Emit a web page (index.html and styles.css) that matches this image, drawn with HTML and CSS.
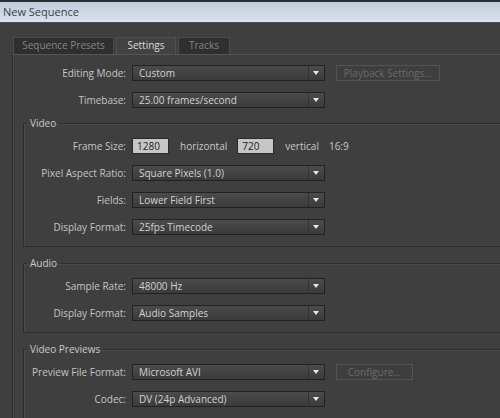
FILE: index.html
```html
<!DOCTYPE html>
<html lang="en">
<head>
    <meta charset="UTF-8">
    <title>New Sequence</title>
    <link rel="stylesheet" href="styles.css">
</head>
<body>
    <div class="title-bar">New Sequence</div>
    <div class="dialog">
        <div class="tabs">
            <div class="tab">Sequence Presets</div>
            <div class="tab active">Settings</div>
            <div class="tab">Tracks</div>
        </div>
        <div class="panel">
            <div class="row top-row">
                <span class="label">Editing Mode:</span>
                <div class="select"><span>Custom</span><i class="arrow"></i></div>
                <button class="btn playback" disabled>Playback Settings...</button>
            </div>
            <div class="row">
                <span class="label">Timebase:</span>
                <div class="select"><span>25.00 frames/second</span><i class="arrow"></i></div>
            </div>

            <fieldset class="group">
                <legend>Video</legend>
                <div class="row">
                    <span class="label">Frame Size:</span>
                    <input class="num" type="text" value="1280">
                    <span class="unit">horizontal</span>
                    <input class="num" type="text" value="720">
                    <span class="unit">vertical</span>
                    <span class="unit">16:9</span>
                </div>
                <div class="row">
                    <span class="label">Pixel Aspect Ratio:</span>
                    <div class="select"><span>Square Pixels (1.0)</span><i class="arrow"></i></div>
                </div>
                <div class="row">
                    <span class="label">Fields:</span>
                    <div class="select"><span>Lower Field First</span><i class="arrow"></i></div>
                </div>
                <div class="row">
                    <span class="label">Display Format:</span>
                    <div class="select"><span>25fps Timecode</span><i class="arrow"></i></div>
                </div>
            </fieldset>

            <fieldset class="group">
                <legend>Audio</legend>
                <div class="row">
                    <span class="label">Sample Rate:</span>
                    <div class="select"><span>48000 Hz</span><i class="arrow"></i></div>
                </div>
                <div class="row">
                    <span class="label">Display Format:</span>
                    <div class="select"><span>Audio Samples</span><i class="arrow"></i></div>
                </div>
            </fieldset>

            <fieldset class="group">
                <legend>Video Previews</legend>
                <div class="row">
                    <span class="label">Preview File Format:</span>
                    <div class="select"><span>Microsoft AVI</span><i class="arrow"></i></div>
                    <button class="btn configure" disabled>Configure...</button>
                </div>
                <div class="row">
                    <span class="label">Codec:</span>
                    <div class="select"><span>DV (24p Advanced)</span><i class="arrow"></i></div>
                </div>
            </fieldset>
        </div>
    </div>
</body>
</html>
```

FILE: styles.css
```css
html, body {
    margin: 0;
    width: 500px;
    height: 418px;
    overflow: hidden;
}

body {
    font-family: "Open Sans", "Noto Sans", Arial, sans-serif;
    font-size: 10px;
    background-color: #3f3f3f;
    color: #c8c8c8;
}

.title-bar {
    height: 20px;
    border-top: 2px solid #2b2e33;
    border-bottom: 1px solid #4d5157;
    background: linear-gradient(#bfcbd9, #d9e4f0);
    color: #3a3f46;
    font-size: 11px;
    line-height: 20px;
    padding-left: 3px;
}

.dialog {
    width: 520px;
    padding: 14px 0 0 12px;
}

.tabs {
    display: flex;
    gap: 2px;
    padding-left: 1px;
    height: 17px;
}

.tab {
    box-sizing: border-box;
    height: 17px;
    line-height: 15px;
    background-color: #2f2f2f;
    border: 1px solid #4a4a4a;
    border-bottom: none;
    color: #858585;
    text-align: center;
    white-space: nowrap;
}

.tab:first-child {
    width: 101px;
}

.tab.active {
    width: 60px;
    background-color: #424242;
    color: #dcdcdc;
    border-color: #505050;
}

.tab:last-child {
    width: 52px;
}

.panel {
    border-top: 1px solid #555555;
    border-left: 1px solid #2e2e2e;
    box-shadow: inset 1px 0 #4a4a4a;
    padding-top: 10px;
}

.row {
    display: flex;
    align-items: center;
    height: 16px;
    margin-bottom: 11px;
}

.label {
    width: 113px;
    padding-right: 6px;
    text-align: right;
    white-space: nowrap;
    color: #c4c4c4;
}

.select {
    box-sizing: border-box;
    width: 193px;
    height: 16px;
    display: flex;
    align-items: center;
    border: 1px solid #222222;
    background: linear-gradient(#4b4b4b, #3b3b3b);
    color: #d2d2d2;
}

.select span {
    flex: 1;
    padding-left: 6px;
    white-space: nowrap;
    line-height: 14px;
}

.arrow {
    width: 15px;
    height: 14px;
    border-left: 1px solid #333333;
    position: relative;
}

.arrow::after {
    content: "";
    position: absolute;
    left: 4px;
    top: 5px;
    border-left: 3.5px solid transparent;
    border-right: 3.5px solid transparent;
    border-top: 4px solid #e8e8e8;
}

.btn {
    box-sizing: border-box;
    height: 16px;
    margin-left: 11px;
    padding: 0;
    font: inherit;
    background-color: #3e3e3e;
    border: 1px solid #545454;
    color: #6a6a6a;
    line-height: 13px;
}

.playback {
    width: 104px;
}

.configure {
    width: 77px;
}

.group {
    margin: 0 0 12px 10px;
    padding: 11px 0 0 0;
    border: 1px solid #2d2d2d;
    box-shadow: inset 1px 1px #4a4a4a;
}

.group legend {
    margin-left: 3px;
    padding: 0 3px;
    line-height: 8px;
    color: #c8c8c8;
}

.group .label {
    width: 102px;
}

.num {
    box-sizing: border-box;
    width: 37px;
    height: 16px;
    padding: 0 0 0 4px;
    font: inherit;
    color: #1e1e1e;
    background-color: #c6c6c6;
    border: 1px solid #2a2a2a;
}

.unit {
    margin: 0 10px 0 11px;
}

.unit + .unit {
    margin-left: 0;
}
```
